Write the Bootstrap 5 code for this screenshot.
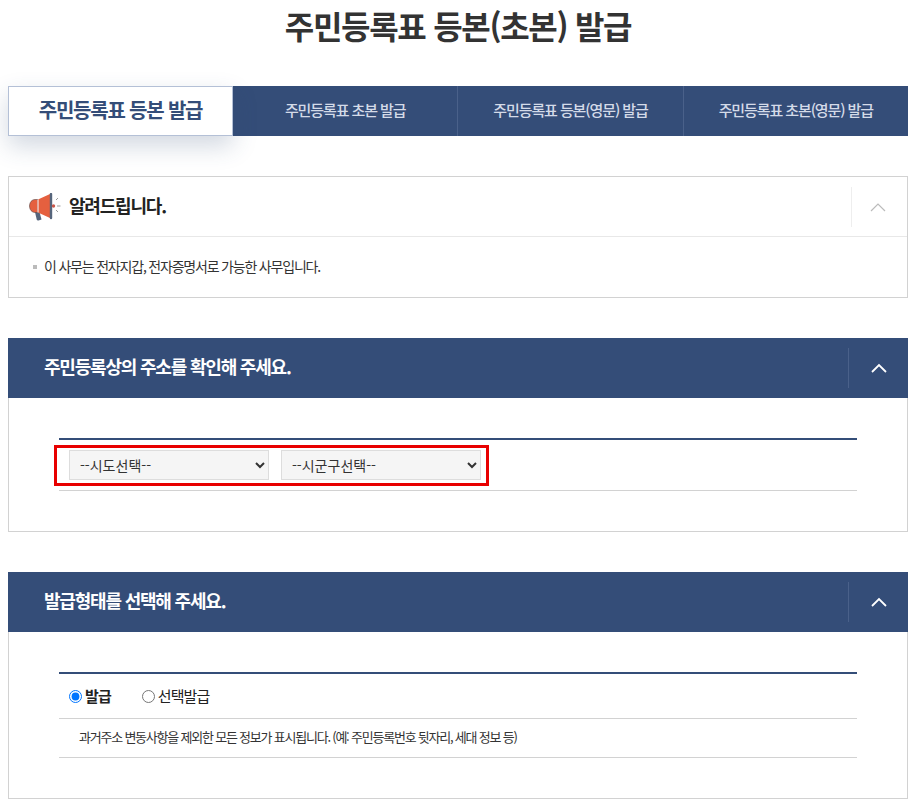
<!DOCTYPE html>
<html lang="ko">
<head>
<meta charset="utf-8">
<title>주민등록표 등본(초본) 발급</title>
<link href="https://cdn.jsdelivr.net/npm/bootstrap@5.3.0/dist/css/bootstrap.min.css" rel="stylesheet">
<style>
html,body{height:803px;overflow:hidden}
body{font-family:"Noto Sans CJK KR","Noto Sans",sans-serif;color:#222;background:#fff}
.pg-wrap{width:900px;margin-left:8px}
.pg-title{font-size:32px;font-weight:700;line-height:50px;color:#333;text-align:center;margin:0 0 36px;letter-spacing:-1.3px}
.tab-bar{height:50px;background:#344d78;margin-bottom:40px}
.tab-item{flex:1 1 0;display:flex;align-items:center;justify-content:center;font-size:15px;font-weight:500;color:#d4dbe8;text-decoration:none;border-left:1px solid #4a618a;letter-spacing:-1.1px;padding-bottom:2px}
.tab-item.on{flex:0 0 225px;background:#fff;border:1px solid #b4c0d6;color:#344d78;font-size:20px;font-weight:700;box-shadow:0 10px 24px rgba(52,77,120,.22);letter-spacing:-1.2px}
.tab-item.on + .tab-item{border-left:0}
.box-panel{border:1px solid #d2d2d2;margin-bottom:40px}
.note-head{height:60px;border-bottom:1px solid #e8e8e8;padding-left:20px}
.note-title{font-size:18px;font-weight:700;color:#222;margin:0 0 2px 8px;letter-spacing:-1.2px}
.note-body{height:60px;padding:0 0 2px 24px;font-size:14px;color:#333;letter-spacing:-1.2px}
.note-body i{display:block;width:4px;height:4px;background:#bbb;margin:2px 7px 0 0}
.tog-cell{width:52px;height:40px;border-left:1px solid #eee;margin-right:4px}
.blue-head{height:60px;background:#344d78;margin:-1px -1px 0;padding-left:36px}
.blue-title{font-size:18px;font-weight:700;color:#fff;margin:0 0 2px;letter-spacing:-1.2px}
.tog-blue{width:60px;height:40px;border-left:1px solid #4a618a}
.inner-area{padding:40px 50px 40px}
.line-top{border-top:2px solid #344d78}
.sel-row{height:51px;border-bottom:1px solid #d2d2d2;padding-left:10px;position:relative}
.red-mark{position:absolute;left:-5px;top:5px;width:435px;height:41px;border:3px solid #e80000}
.fake-sel{width:200px;height:30px;background:#f5f5f5 !important;border:1px solid #ddd;border-radius:0;font-size:14px;color:#333;padding:0 6px;font-family:"Noto Sans CJK KR",sans-serif}
.radio-row{height:45px;border-bottom:1px solid #d2d2d2;padding-left:10px;font-size:15px;letter-spacing:-.9px}
.radio-row input{width:13px;height:13px;margin:0 3px 0 0;accent-color:#0075ff}
.radio-row label{display:flex;align-items:center;margin-right:31px}
.desc-row{height:39px;border-bottom:1px solid #d2d2d2;padding:0 0 2px 20px;font-size:13px;color:#333;letter-spacing:-1.22px}
</style>
</head>
<body>
<div class="pg-wrap">
  <h1 class="pg-title">주민등록표 등본(초본) 발급</h1>
  <nav class="tab-bar d-flex">
    <a class="tab-item on" href="#">주민등록표 등본 발급</a>
    <a class="tab-item" href="#">주민등록표 초본 발급</a>
    <a class="tab-item" href="#">주민등록표 등본(영문) 발급</a>
    <a class="tab-item" href="#">주민등록표 초본(영문) 발급</a>
  </nav>

  <section class="box-panel">
    <div class="note-head d-flex align-items-center">
      <svg width="32" height="28" viewBox="0 0 32 28" aria-hidden="true">
        <path d="M6 19l4.500 0 2 7.500-3 1c-1 .2-1.500-.2-1.800-1z" fill="#56657c"/>
        <path d="M6 6.500h3v13H6c-3 0-5.500-2.800-5.500-6.500S3 6.500 6 6.500z" fill="#e5603f" stroke="#5a4a4a" stroke-width=".6"/>
        <path d="M9 6.500L21 1v24L9 19.500z" fill="#e5603f"/>
        <path d="M9 6.500v13" stroke="#fff" stroke-width="1"/>
        <path d="M22 1v24" stroke="#56657c" stroke-width="2.400" stroke-linecap="round"/>
        <circle cx="24.500" cy="13" r="1.700" fill="#c9574a"/>
        <path d="M27 7l2-2M28 13h3.500M27 17l2 2" stroke="#9a9a9a" stroke-width="1" fill="none"/>
      </svg>
      <h2 class="note-title">알려드립니다.</h2>
      <div class="tog-cell ms-auto d-flex align-items-center justify-content-center">
        <svg width="16" height="10" viewBox="0 0 16 10" aria-hidden="true"><path d="M1 9l7-7 7 7" fill="none" stroke="#bbb" stroke-width="1.200"/></svg>
      </div>
    </div>
    <div class="note-body d-flex align-items-center"><i></i>이 사무는 전자지갑, 전자증명서로 가능한 사무입니다.</div>
  </section>

  <section class="box-panel">
    <div class="blue-head d-flex align-items-center">
      <h2 class="blue-title">주민등록상의 주소를 확인해 주세요.</h2>
      <div class="tog-blue ms-auto d-flex align-items-center justify-content-center">
        <svg width="16" height="10" viewBox="0 0 16 10" aria-hidden="true"><path d="M1 9l7-7 7 7" fill="none" stroke="#fff" stroke-width="1.800"/></svg>
      </div>
    </div>
    <div class="inner-area">
      <div class="line-top">
        <div class="sel-row d-flex align-items-center gap-2">
          <select class="fake-sel me-1"><option>--시도선택--</option></select>
          <select class="fake-sel"><option>--시군구선택--</option></select>
          <div class="red-mark"></div>
        </div>
      </div>
    </div>
  </section>

  <section class="box-panel">
    <div class="blue-head d-flex align-items-center">
      <h2 class="blue-title">발급형태를 선택해 주세요.</h2>
      <div class="tog-blue ms-auto d-flex align-items-center justify-content-center">
        <svg width="16" height="10" viewBox="0 0 16 10" aria-hidden="true"><path d="M1 9l7-7 7 7" fill="none" stroke="#fff" stroke-width="1.800"/></svg>
      </div>
    </div>
    <div class="inner-area">
      <div class="line-top">
        <div class="radio-row d-flex align-items-center">
          <label class="fw-bold"><input type="radio" name="kind" checked>발급</label>
          <label><input type="radio" name="kind">선택발급</label>
        </div>
        <div class="desc-row d-flex align-items-center">과거주소 변동사항을 제외한 모든 정보가 표시됩니다. (예: 주민등록번호 뒷자리, 세대 정보 등)</div>
      </div>
    </div>
  </section>
</div>
</body>
</html>
